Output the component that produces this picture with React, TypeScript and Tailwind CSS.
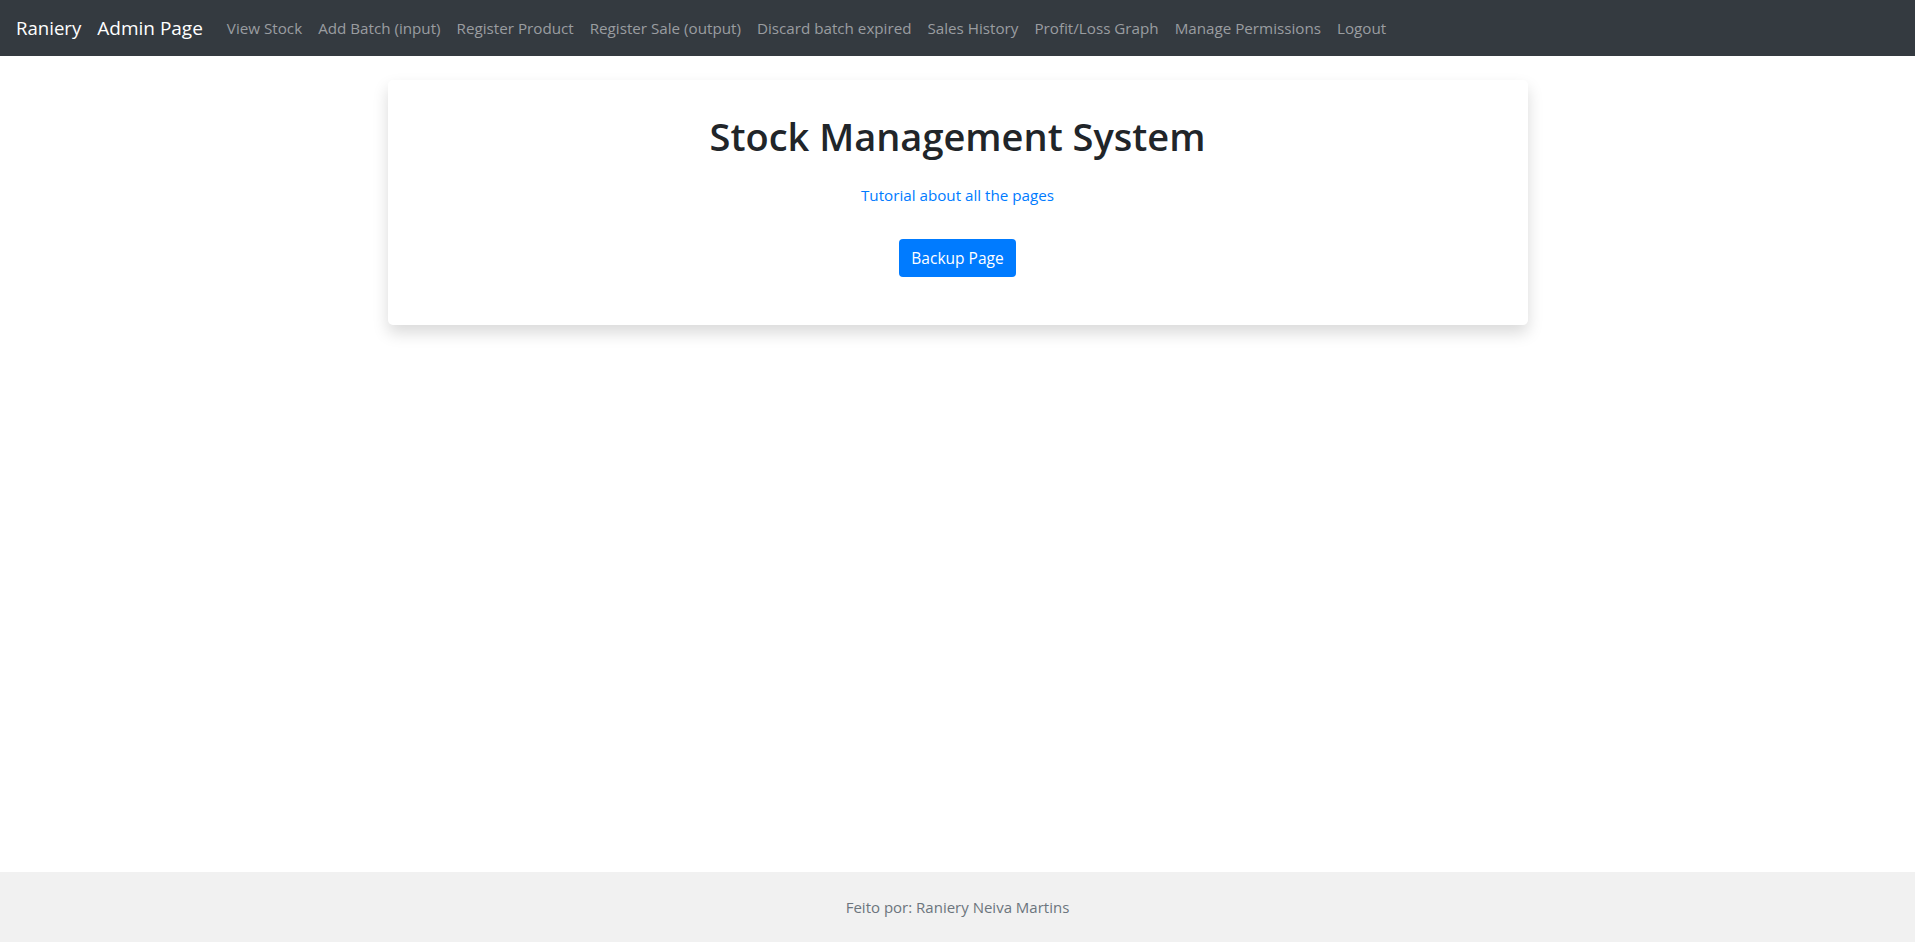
const links = [
  "View Stock",
  "Add Batch (input)",
  "Register Product",
  "Register Sale (output)",
  "Discard batch expired",
  "Sales History",
  "Profit/Loss Graph",
  "Manage Permissions",
  "Logout",
];

export default function App() {
  return (
    <div className="flex min-h-screen flex-col bg-white font-['Open_Sans',sans-serif] text-[#212529]">
      <nav className="flex h-14 items-center bg-[#343a40] px-4">
        <a href="#" className="mr-4 text-[18.6px] leading-[30px] text-white">
          Raniery
        </a>
        <a href="#" className="mr-4 text-[19px] leading-[30px] text-white">
          Admin Page
        </a>
        <ul className="flex items-center">
          {links.map((l) => (
            <li key={l}>
              <a href="#" className="block px-2 py-2 text-[15.2px] leading-6 text-[#9a9da0]">
                {l}
              </a>
            </li>
          ))}
        </ul>
      </nav>

      <main className="flex-1">
        <div className="mx-auto mt-6 w-[1140px] rounded-[5px] bg-white px-4 pt-8 pb-12 text-center shadow-[0_0.5rem_1rem_rgba(0,0,0,0.15)]">
          <h1 className="text-[38px] font-semibold leading-[48px]">Stock Management System</h1>
          <p className="mt-[23px] text-[15.2px] leading-6">
            <a href="#" className="text-[#007bff]">
              Tutorial about all the pages
            </a>
          </p>
          <button className="mt-8 rounded bg-[#007bff] px-3 py-[7px] text-[15.5px] leading-6 text-white">
            Backup Page
          </button>
        </div>
      </main>

      <footer className="flex h-[70px] items-center justify-center bg-[#f1f1f1] text-[15px] leading-6 text-[#6c757d]">
        Feito por: Raniery Neiva Martins
      </footer>
    </div>
  );
}
